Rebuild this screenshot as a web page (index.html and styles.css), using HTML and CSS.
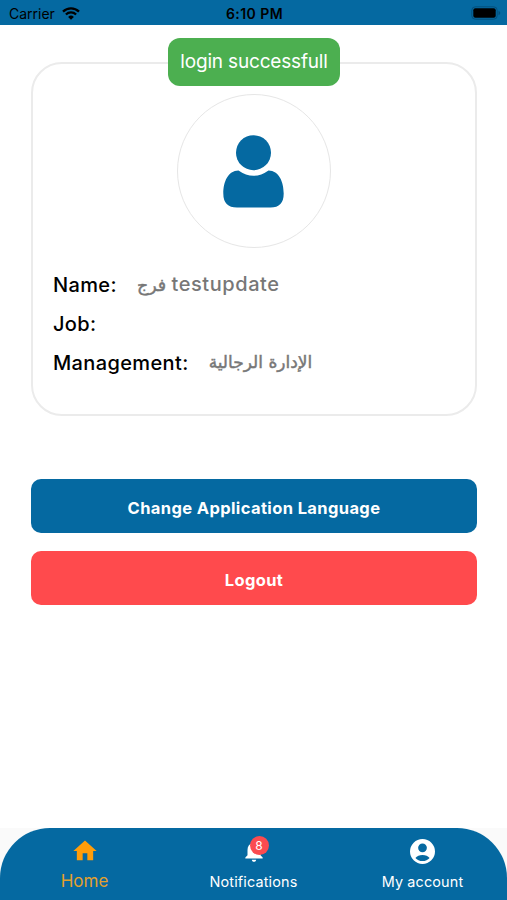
FILE: index.html
```html
<!DOCTYPE html>
<html lang="en">
<head>
<meta charset="utf-8">
<title>Home</title>
<link rel="stylesheet" href="styles.css">
</head>
<body>
<div class="app">
  <header class="status">
    <div class="carrier"><span>Carrier</span>
      <svg class="wifi" viewBox="0 0 18 13"><path d="M1 4.6a11.4 11.4 0 0 1 16 0M3.9 7.5a7.3 7.3 0 0 1 10.2 0" fill="none" stroke="#000" stroke-width="2.3"/><path d="M9 12.8 6.1 9.9a4.2 4.2 0 0 1 5.8 0z"/></svg>
    </div>
    <div class="time">6:10 PM</div>
    <svg class="battery" viewBox="0 0 30 14"><rect x=".8" y=".8" width="25.4" height="12.4" rx="3.5" fill="none" stroke="#04507c"/><rect x="2.3" y="2.3" width="22.4" height="9.4" rx="2"/><path d="M27.5 4.8q1.8.7 1.8 2.2t-1.8 2.2z" fill="#04507c"/></svg>
  </header>
  <main class="content">
    <section class="card">
      <div class="avatar">
        <svg viewBox="0 0 62 74"><circle cx="30.5" cy="17.7" r="17.5"/><path d="M15.500 35.500C5 35.500 .3 47 .3 58.500Q.3 72.500 14 72.500H47.500Q60.700 72.500 60.700 58.500C60.700 47 56 35.500 45.500 35.500Q38 40.800 30.500 40.800T15.500 35.500z"/></svg>
      </div>
      <dl class="details">
        <div class="row"><dt>Name:</dt><dd class="value" dir="ltr"><span class="arabic">فرج</span> <span class="user">testupdate</span></dd></div>
        <div class="row"><dt>Job:</dt></div>
        <div class="row"><dt>Management:</dt><dd class="arabic dept" dir="rtl">الإدارة الرجالية</dd></div>
      </dl>
    </section>
    <button class="button language">Change Application Language</button>
    <button class="button logout">Logout</button>
  </main>
  <nav class="nav-wrap">
    <div class="nav">
      <a class="tab active"><svg class="icon" viewBox="0 0 24 24"><path d="M10 20v-6h4v6h5v-8h3L12 3 2 12h3v8z"/></svg><span>Home</span></a>
      <a class="tab"><span class="bell"><svg class="icon bell-icon" viewBox="0 0 24 24"><path d="M12 22c1.1 0 2-.9 2-2h-4c0 1.100.9 2 2 2zm6-6v-5c0-3.070-1.640-5.640-4.500-6.320V4c0-.830-.670-1.500-1.500-1.500s-1.500.670-1.500 1.500v.680C7.630 5.360 6 7.920 6 11v5l-2 2v1h16v-1l-2-2z"/></svg><b class="badge">8</b></span><span>Notifications</span></a>
      <a class="tab"><svg class="icon account" viewBox="0 0 24 24"><path fill-rule="evenodd" d="M12 0a12 12 0 1 0 0 24a12 12 0 0 0 0-24zM12 4.300a4.200 4.200 0 1 1 0 8.400a4.200 4.200 0 0 1 0-8.400zM5.200 18.200Q7.500 15.300 12 15.300T18.800 18.200Q16.300 21.200 12 21.200T5.200 18.200z"/></svg><span>My account</span></a>
    </div>
  </nav>
</div>
<div class="toast">login successfull</div>
</body>
</html>
```
FILE: styles.css
```css
* { box-sizing: border-box; }
body { margin: 0; background: #fff; font-family: Inter, "Liberation Sans", sans-serif; color: #000; }
.app { height: 900px; display: flex; flex-direction: column; overflow: hidden; }
.status { height: 25px; background: #0569a1; display: grid; grid-template-columns: 1fr auto 1fr; align-items: center; padding: 2px 7px 0 9px; font-size: 14px; line-height: 22px; }
.carrier { display: flex; align-items: center; gap: 7px; }
.wifi { width: 18px; height: 13px; }
.time { font-weight: 600; font-size: 14px; letter-spacing: .45px; }
.battery { width: 30px; height: 14px; justify-self: end; margin: -1px -1px 0 0; }
.content { flex: 1; display: flex; flex-direction: column; padding: 37px 30px 0 31px; }
.card { height: 354px; border: 2px solid #ebebeb; border-radius: 31px; padding: 30px 20px 0; }
.avatar { width: 154px; height: 154px; margin: 0 auto; border: 1px solid #e6e6e6; border-radius: 50%; display: flex; justify-content: center; padding-top: 40px; }
.avatar svg { width: 62px; height: 74px; fill: #0569a1; }
.details { margin: 17px 0 0; }
.row { height: 39px; display: flex; align-items: center; gap: 20px; font-size: 20px; font-weight: 500; letter-spacing: .37px; white-space: nowrap; }
.row dd { margin: 0; color: #777; }
.value { padding-bottom: 2px; }
.user { letter-spacing: .55px; }
.arabic { font-family: "DejaVu Sans", sans-serif; font-size: 17.5px; letter-spacing: 0; -webkit-text-stroke: .45px #777; }
.row .dept { font-size: 17px; padding-bottom: 2px; }
.button { height: 54px; border: 0; border-radius: 10px; color: #fff; font: 700 16.5px/54px Inter, "Liberation Sans", sans-serif; letter-spacing: .38px; padding: 2px 0 0; }
.language { margin-top: 63px; background: #0569a1; }
.logout { margin-top: 18px; background: #ff4a4d; }
.nav-wrap { height: 72px; background: #fafafa; }
.nav { height: 72px; background: #0569a1; border-radius: 50px 50px 0 0; display: grid; grid-template-columns: repeat(3, 1fr); }
.tab { color: #fff; fill: currentColor; display: flex; flex-direction: column; align-items: center; padding-top: 9px; font-size: 14.4px; line-height: 20px; letter-spacing: .15px; gap: 7px; }
.active { color: #ff9d0a; font-size: 17px; gap: 6px; letter-spacing: 0; }
.active span { color: #e4a02d; }
.icon { width: 28px; height: 28px; display: block; }
.bell-icon { width: 26px; margin: 0 1px; }
.account { width: 25px; height: 25px; margin: 2px 0 1px; }
.bell { position: relative; }
.badge { position: absolute; left: 10px; top: -1px; width: 19px; height: 19px; border-radius: 50%; background: #fb4b50; font-size: 12px; font-weight: 400; line-height: 20px; text-align: center; }
.toast { position: absolute; left: 168px; top: 38px; width: 172px; height: 48px; border-radius: 12px; background: #4caf50; color: #fff; font-size: 19px; letter-spacing: -.18px; line-height: 48px; text-align: center; white-space: nowrap; }
```
